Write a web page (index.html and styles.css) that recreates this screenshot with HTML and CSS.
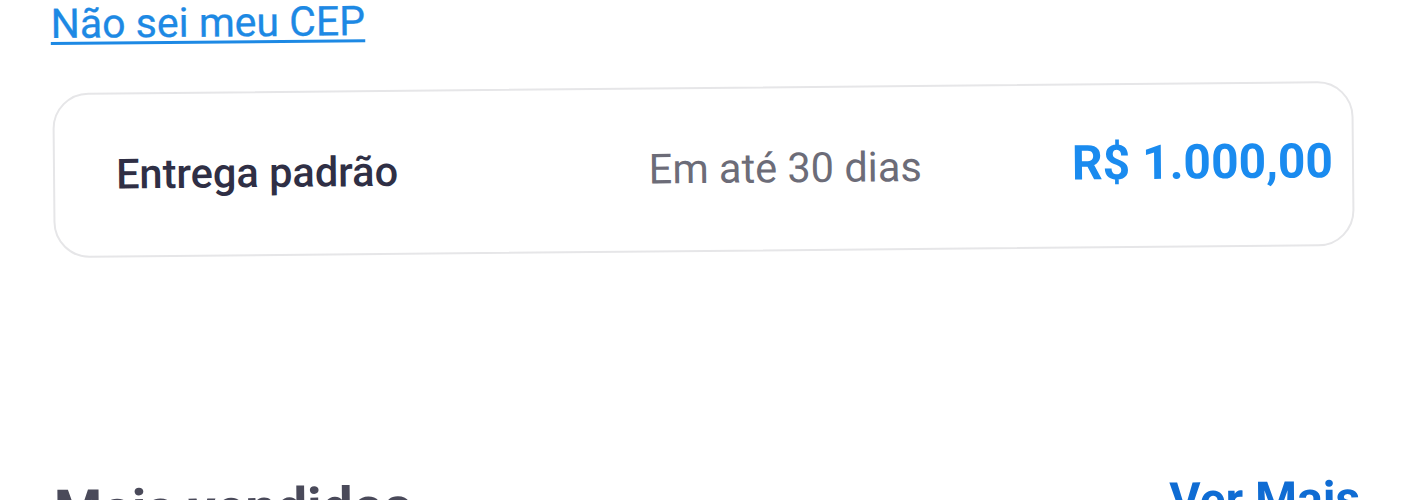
FILE: index.html
```html
<!DOCTYPE html>
<html lang="pt-BR">
<head>
    <meta charset="UTF-8">
    <meta name="viewport" content="width=device-width, initial-scale=1.0">
    <title>Frete</title>
    <link rel="stylesheet" href="styles.css">
</head>
<body>
    <div class="page">
        <a class="cep-link" href="#">Não sei meu CEP</a>

        <div class="shipping-card">
            <div class="shipping-row">
                <span class="shipping-name">Entrega padrão</span>
                <span class="shipping-eta">Em até 30 dias</span>
                <span class="shipping-price">R$ 1.000,00</span>
            </div>
        </div>

        <div class="section-header">
            <h2>Mais vendidos</h2>
            <a class="see-more" href="#">Ver Mais</a>
        </div>
    </div>
</body>
</html>
```

FILE: styles.css
```css
html, body {
    margin: 0;
    padding: 0;
    background-color: #ffffff;
    overflow: hidden;
}
body {
    font-family: Roboto, "Liberation Sans", Arial, sans-serif;
}
.page {
    padding: 1px 54px 0 53px;
    transform: rotate(-0.53deg);
    transform-origin: 704px 168px;
}
.cep-link {
    display: inline-block;
    margin-left: -1px;
    font-size: 41px;
    line-height: 34px;
    color: #1d89e4;
    text-decoration: underline;
    text-decoration-thickness: 3px;
    text-underline-offset: 4px;
    -webkit-text-stroke: 0.3px #1d89e4;
}
.shipping-card {
    box-sizing: border-box;
    height: 165px;
    margin-top: 51px;
    padding: 0 19px 6px 61px;
    border: 2px solid #e6e6e8;
    border-radius: 36px;
    display: flex;
    align-items: center;
}
.shipping-row {
    flex: 1;
    display: flex;
    align-items: baseline;
    line-height: 1;
}
.shipping-name {
    flex: 1;
    font-size: 41.5px;
    font-weight: 500;
    color: #2f2f45;
}
.shipping-eta {
    margin-right: 150px;
    font-size: 41.5px;
    color: #6c6c78;
}
.shipping-price {
    font-size: 48px;
    font-weight: 700;
    color: #1a8bef;
}
.section-header {
    margin-top: 225px;
    margin-left: -2px;
    margin-right: -3px;
    display: flex;
    justify-content: space-between;
    align-items: center;
    line-height: 1;
}
.section-header h2 {
    margin: 0;
    font-size: 55px;
    font-weight: 700;
    color: #4a4a5a;
}
.see-more {
    font-size: 48px;
    font-weight: 700;
    color: #0f6cd3;
    text-decoration: none;
}
```
